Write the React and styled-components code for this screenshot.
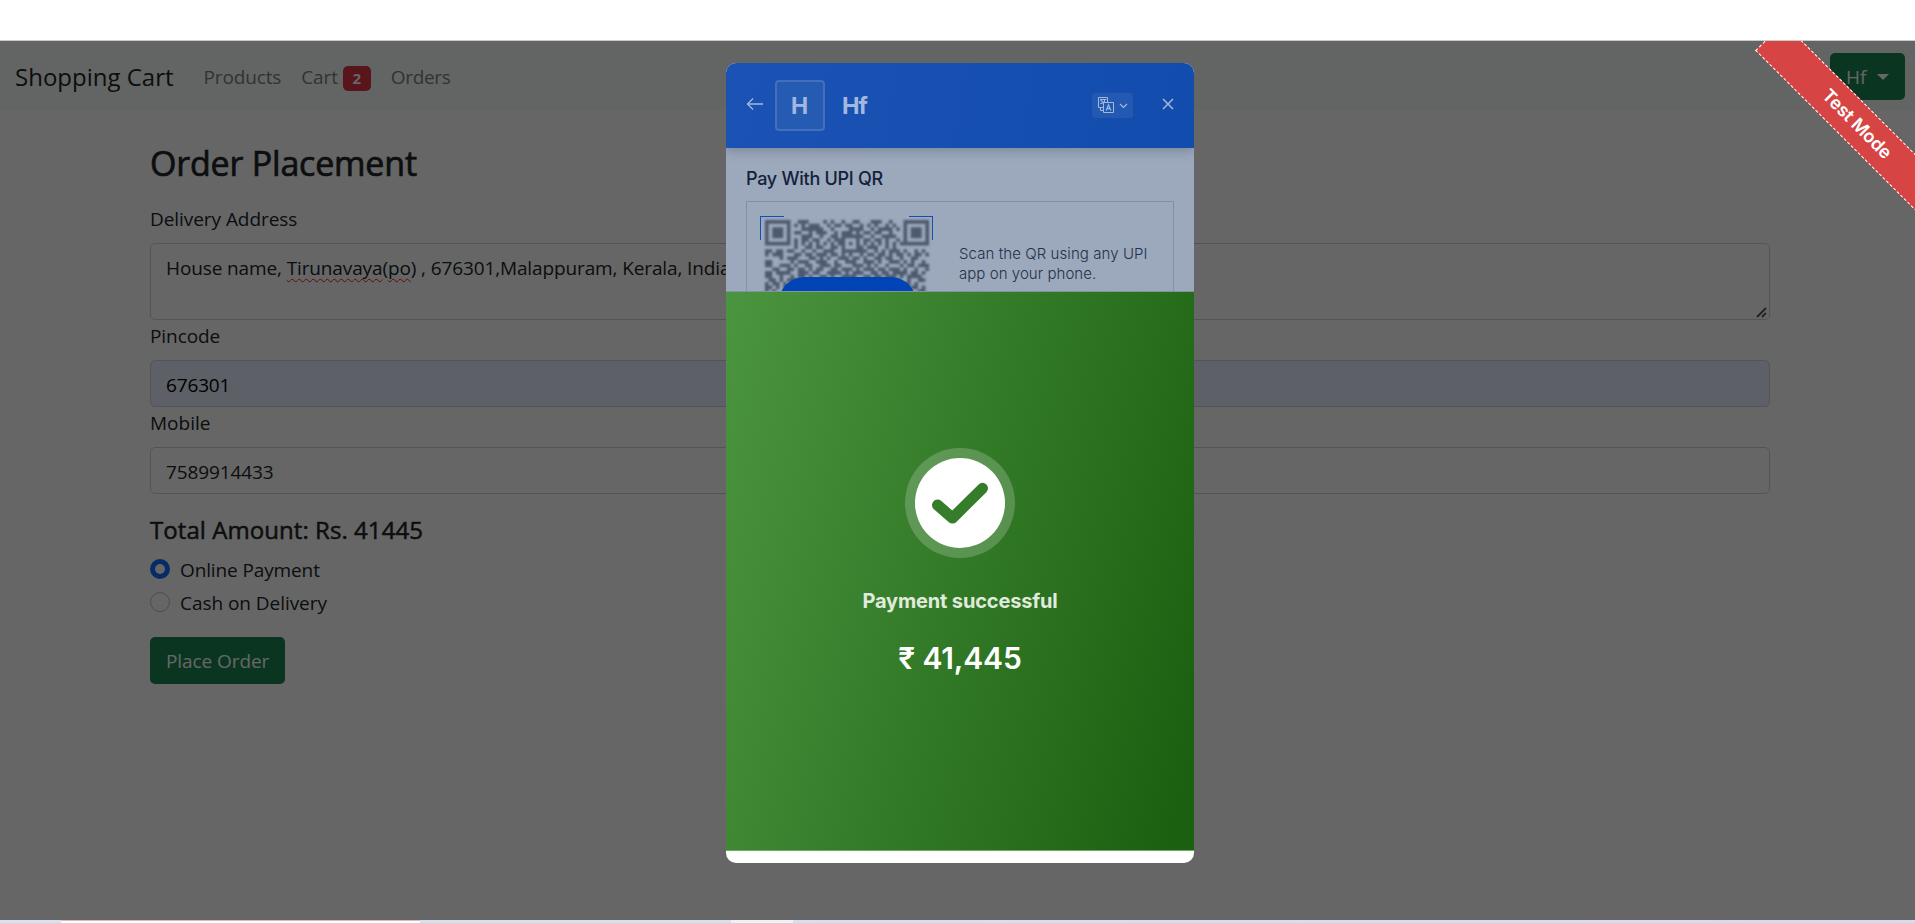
import React from 'react';
import styled, { createGlobalStyle, css } from 'styled-components';

const Global = createGlobalStyle`
  * { box-sizing: border-box; }
  html, body { margin: 0; padding: 0; overflow: hidden; background: #fff; }
  body { font-family: "Open Sans", "Noto Sans", sans-serif; color: #212529; }
`;

const Screen = styled.div`
  width: 1915px;
  height: 923px;
  display: flex;
  flex-direction: column;
  overflow: hidden;
`;
const TopStrip = styled.div`
  height: 41px;
  flex: none;
  background: #fff;
  border-bottom: 1px solid #c9cbca;
`;
const Viewport = styled.div`
  position: relative;
  height: 879px;
  flex: none;
  overflow: hidden;
  background: #fff;
`;
const Taskbar = styled.div`
  height: 3px;
  flex: none;
  display: flex;
`;
const TaskSegment = styled.div`
  ${p => (p.$width ? `width: ${p.$width}px;` : 'flex: 1;')}
  background: ${p => p.$bg};
  ${p => p.$active && 'border-top: 1px solid #cdbfc2;'}
`;

const T = styled.span`
  display: block;
  margin: 0;
  white-space: pre;
  font-size: ${p => p.$s || 19}px;
  letter-spacing: ${p => p.$ls || 0}px;
  font-weight: ${p => p.$w || 400};
  line-height: ${p => p.$lh || 30}px;
  color: ${p => p.$c || 'inherit'};
`;
const Heading = styled(T)`
  -webkit-text-stroke: ${p => p.$stroke}px currentColor;
`;
const TotalLine = styled(Heading)`
  margin: 17px 0 4px;
`;

/* ---------- page behind the checkout ---------- */
const Navbar = styled.nav`
  height: 69px;
  display: flex;
  align-items: center;
  padding: 2px 10px 0 15px;
  background: #f8fdfa;
`;
const NavLinks = styled.div`
  display: flex;
  align-items: center;
  gap: 20px;
  margin-left: 30px;
  flex: 1;
`;
const CartLink = styled.div`
  display: flex;
  align-items: center;
  gap: 5px;
`;
const Badge = styled.span`
  width: 28px;
  height: 25px;
  margin-top: 3px;
  border-radius: 5px;
  background: #dc3545;
  color: #fff;
  font-size: 15px;
  font-weight: 700;
  line-height: 25px;
  text-align: center;
`;
const Button = styled.button`
  display: flex;
  align-items: center;
  width: ${p => p.$width}px;
  height: 47px;
  padding: 0 16px;
  border: 0;
  border-radius: 5px;
  background: #198754;
  color: #fff;
  font-family: inherit;
`;
const UserButton = styled(Button)`
  gap: 11px;
`;
const PlaceOrder = styled(Button)`
  margin-top: 18px;
`;
const Caret = styled.span`
  border-top: 6px solid #fff;
  border-left: 6px solid transparent;
  border-right: 6px solid transparent;
`;
const Container = styled.main`
  width: 1620px;
  margin-left: 150px;
  padding-top: 29px;
  display: flex;
  flex-direction: column;
`;
const Field = styled.div`
  position: relative;
  height: ${p => p.$h || 47}px;
  padding: 9px 15px 0;
  border: 1px solid #ced4da;
  border-radius: 5px;
  background: ${p => (p.$filled ? '#e8f0fe' : '#fff')};
  color: ${p => (p.$filled ? '#000' : '#212529')};
`;
const FieldLabel = styled.label`
  display: block;
  height: ${p => p.$h || 40}px;
  padding-top: ${p => p.$pt || 1}px;
`;
const Misspelt = styled.span`
  text-decoration: underline wavy #ff1a1a 1.3px;
  text-decoration-skip-ink: none;
  text-underline-offset: 3px;
`;
const Grip = styled.svg`
  position: absolute;
  right: 2px;
  bottom: 1px;
`;
const RadioRow = styled.div`
  display: flex;
  align-items: center;
  gap: 10px;
  height: 33px;
`;
const Radio = styled.span`
  width: 20px;
  height: 20px;
  border-radius: 50%;
  margin-top: -1px;
  background: #fff;
  border: ${p => (p.$on ? '5px solid #0d6efd' : '1px solid #bfbfbf')};
`;
const Backdrop = styled.div`
  position: absolute;
  inset: 0;
  background: rgba(0, 0, 0, 0.6);
`;

/* ---------- test mode ribbon ---------- */
const Ribbon = styled.div`
  position: absolute;
  left: 1733px;
  top: 62.5px;
  width: 248px;
  height: 40px;
  transform: rotate(45deg);
  background: #d64444;
  border: 1px dashed #fff;
  color: #fff;
  font: 600 18px/38px Inter, sans-serif;
  letter-spacing: -0.2px;
  text-align: center;
`;

/* ---------- checkout modal ---------- */
const Modal = styled.section`
  position: absolute;
  left: 726px;
  top: 22px;
  width: 468px;
  height: 800px;
  border-radius: 10px;
  overflow: hidden;
  background: #fff;
  font-family: Inter, sans-serif;
  display: flex;
  flex-direction: column;
`;
const ModalHeader = styled.header`
  height: 85px;
  flex: none;
  display: flex;
  align-items: center;
  padding: 0 20px;
  background: linear-gradient(100deg, #1a53b3, #124cac);
  box-shadow: 0 3px 10px rgba(40, 60, 90, 0.3);
  position: relative;
  color: #a3b8de;
`;
const HeaderIcon = styled.svg`
  margin-bottom: 3px;
`;
const Logo = styled.div`
  width: 50px;
  height: 51px;
  margin: 0 17px 0 11px;
  padding: 1px 1px 0 0;
  border: 2px solid #4470b9;
  border-radius: 4px;
  background: #255bb2;
  display: flex;
  justify-content: center;
  align-items: center;
`;
const LangButton = styled.div`
  width: 41px;
  height: 25px;
  margin: 0 29px 0 auto;
  border-radius: 3px;
  background: #2459b2;
  display: flex;
  align-items: center;
  justify-content: space-between;
  padding: 0 5px 2px;
`;
const Chevron = styled.svg`
  margin-top: 3px;
`;
const ModalBody = styled.div`
  height: 144px;
  flex: none;
  overflow: hidden;
  background: #9ca8bc;
  border-bottom: 1px solid #8493a0;
  padding: 17px 20px 0;
  color: #14213a;
`;
const QrCard = styled.div`
  margin-top: 8px;
  height: 200px;
  padding: 14px 0 0 13px;
  border: 1px solid #8290a5;
  display: flex;
  gap: 26px;
`;
const QrFrame = styled.div`
  position: relative;
  width: 173px;
  height: 173px;
  padding: 4px 5px;
`;
const Corner = styled.i`
  position: absolute;
  top: 0;
  width: 24px;
  height: 24px;
  border-top: 1px solid #1450b4;
  ${p => (p.$right
    ? css`right: 0; border-right: 1px solid #1450b4;`
    : css`left: 0; border-left: 1px solid #1450b4;`)}
`;
const QrButton = styled.div`
  position: absolute;
  left: 19px;
  top: 61px;
  width: 137px;
  height: 50px;
  border-radius: 25px;
  background: #0044b6;
`;
const Hint = styled.div`
  padding-top: 28px;
  color: #233049;
`;
const Success = styled.div`
  height: 559px;
  flex: none;
  border-bottom: 1px solid #6fa867;
  background: linear-gradient(105deg, #4c9540 0%, #1b6010 96%);
  display: flex;
  flex-direction: column;
  align-items: center;
  gap: 22px;
  padding-top: 155.5px;
  color: #fff;
`;
const SuccessMark = styled.svg`
  margin-bottom: 6px;
`;

const QR = [
  '111111100111000010100100110001110010001111111',
  '100000101010111001011011001010100101001000001',
  '101110100011111100100001111001011110101011101',
  '101110101100101110010111010110110010001011101',
  '101110100011100100110111111001001111001011101',
  '100000101011011001011100010110110100101000001',
  '111111101010101010101101010101010101011111111',
  '000000001001101100110100011011100101000000000',
  '110110110010010011100111111100101011101001010',
  '101110001101101110110101001011011010110101101',
  '000010111000110101001110110100110110010011000',
  '110000010111001110010011100111010011101010010',
  '110011101001100111011000111010100100010110111',
  '001100110110101100110111010111011011101001001',
  '110111100111011001111010111001101101111011010',
  '110010010110100110100111100110110111010111100',
  '011010111001011101011100111010111010100100110',
  '101101000111101010011111010111101111101101000',
  '110101011010110111010010101101010110010011010',
  '101001101001011010111111001010111101111100110',
];
const unit = 164 / 45;
const size = unit.toFixed(2);
const qrPath = QR.map((row, y) =>
  row.split('').map((c, x) =>
    c === '1' ? `M${(x * unit).toFixed(2)} ${(y * unit).toFixed(2)}h${size}v${size}h-${size}z` : ''
  ).join('')
).join('');

const QrSvg = styled.svg`
  display: block;
  filter: blur(0.9px);
`;

function QrCode() {
  return (
    <QrSvg width="164" height="73" viewBox="0 0 164 73">
      <path d={qrPath} fill="#4d5a6e" />
    </QrSvg>
  );
}

export default function App() {
  return (
    <Screen>
      <Global />
      <TopStrip />
      <Viewport>
        <Navbar>
          <T $s={24} $lh={38}>Shopping Cart</T>
          <NavLinks>
            <T $c="#7a7f7f" $ls={-0.15}>Products</T>
            <CartLink>
              <T $c="#7a7f7f" $ls={-0.1}>Cart</T>
              <Badge>2</Badge>
            </CartLink>
            <T $c="#7a7f7f" $ls={-0.35}>Orders</T>
          </NavLinks>
          <UserButton $width={75}>
            <T>Hf</T>
            <Caret />
          </UserButton>
        </Navbar>
        <Container>
          <Heading as="h2" $s={34} $lh={48} $ls={-0.2} $stroke={0.7}>Order Placement</Heading>
          <FieldLabel $pt={17} $h={56}><T $ls={-0.06}>Delivery Address</T></FieldLabel>
          <Field $h={77}>
            <T $ls={-0.12}>House name, <Misspelt>Tirunavaya</Misspelt>(<Misspelt>po</Misspelt>) , 676301,Malappuram, Kerala, India</T>
            <Grip width="11" height="11" viewBox="0 0 11 11" fill="none" stroke="#555" strokeWidth="1.8">
              <path d="M1 10L10 1M6 10L10 6" />
            </Grip>
          </Field>
          <FieldLabel><T $ls={-0.08}>Pincode</T></FieldLabel>
          <Field $filled><T $ls={-0.15}>676301</T></Field>
          <FieldLabel><T>Mobile</T></FieldLabel>
          <Field><T $ls={-0.12}>7589914433</T></Field>
          <TotalLine as="h4" $s={24} $lh={38} $ls={0.06} $stroke={0.5}>Total Amount: Rs. 41445</TotalLine>
          <RadioRow><Radio $on /><T $ls={-0.12}>Online Payment</T></RadioRow>
          <RadioRow><Radio /><T $ls={-0.05}>Cash on Delivery</T></RadioRow>
          <PlaceOrder $width={135}><T $ls={-0.08}>Place Order</T></PlaceOrder>
        </Container>
        <Backdrop />
        <Ribbon>Test Mode</Ribbon>
        <Modal>
          <ModalHeader>
            <HeaderIcon width="18" height="14" viewBox="0 0 18 14" fill="none" stroke="currentColor" strokeWidth="1.3">
              <path d="M17 7H1.6M7 1.5L1.5 7L7 12.5" />
            </HeaderIcon>
            <Logo><T $s={23} $w={700} $lh={28}>H</T></Logo>
            <T $s={23.5} $w={700} $lh={28} $ls={-1}>Hf</T>
            <LangButton>
              <svg width="17" height="17" viewBox="0 0 17 17" fill="none" stroke="currentColor" strokeWidth="1">
                <path d="M6.5 11.5H1.5V1.5H10.5V6.5" />
                <path d="M3 3.5H9.5M3.3 4.8H5.2V7.5H3.3M5.2 6H7.5M7.5 3.5V6.5M3.5 11.5V14.5H6.5" />
                <path d="M6.5 6.5H16.5V16.5H6.5Z" />
                <path d="M9.2 14.5L11.5 8.8L13.8 14.5M10 12.6H13" strokeWidth="1.2" />
              </svg>
              <Chevron width="9" height="6" viewBox="0 0 9 6" fill="none" stroke="currentColor" strokeWidth="1.2">
                <path d="M1 1L4.5 4.5L8 1" />
              </Chevron>
            </LangButton>
            <HeaderIcon width="12" height="12" viewBox="0 0 12 12" fill="none" stroke="currentColor" strokeWidth="1.5">
              <path d="M1 1L11 11M11 1L1 11" />
            </HeaderIcon>
          </ModalHeader>
          <ModalBody>
            <T $s={18} $w={500} $lh={28} $ls={-0.27}>Pay With UPI QR</T>
            <QrCard>
              <QrFrame>
                <QrCode />
                <Corner />
                <Corner $right />
                <QrButton />
              </QrFrame>
              <Hint>
                <T $s={15} $w={300} $lh={20} $ls={0.08}>Scan the QR using any UPI</T>
                <T $s={15} $w={300} $lh={20} $ls={0.05}>app on your phone.</T>
              </Hint>
            </QrCard>
          </ModalBody>
          <Success>
            <SuccessMark width="110" height="110" viewBox="0 0 110 110">
              <circle cx="55" cy="55" r="55" fill="#fff" fillOpacity="0.2" />
              <circle cx="55" cy="55" r="45" fill="#fff" />
              <path d="M32.5 57L47.5 70L77.5 40.3" fill="none" stroke="#357c2b" strokeWidth="11" strokeLinecap="round" strokeLinejoin="round" />
            </SuccessMark>
            <T $s={20} $w={700} $lh={30} $ls={-0.16} $c="#e0ebde">Payment successful</T>
            <T $s={30} $w={600} $lh={40} $ls={-0.15}>₹ 41,445</T>
          </Success>
        </Modal>
      </Viewport>
      <Taskbar>
        <TaskSegment $width={61} $bg="#cfe5ef" />
        <TaskSegment $width={359} $bg="#fff" $active />
        <TaskSegment $width={311} $bg="#cfe4ed" />
        <TaskSegment $width={62} $bg="#eaf3f8" />
        <TaskSegment $bg="linear-gradient(90deg, #d0e2ee, #d5dcec)" />
      </Taskbar>
    </Screen>
  );
}
